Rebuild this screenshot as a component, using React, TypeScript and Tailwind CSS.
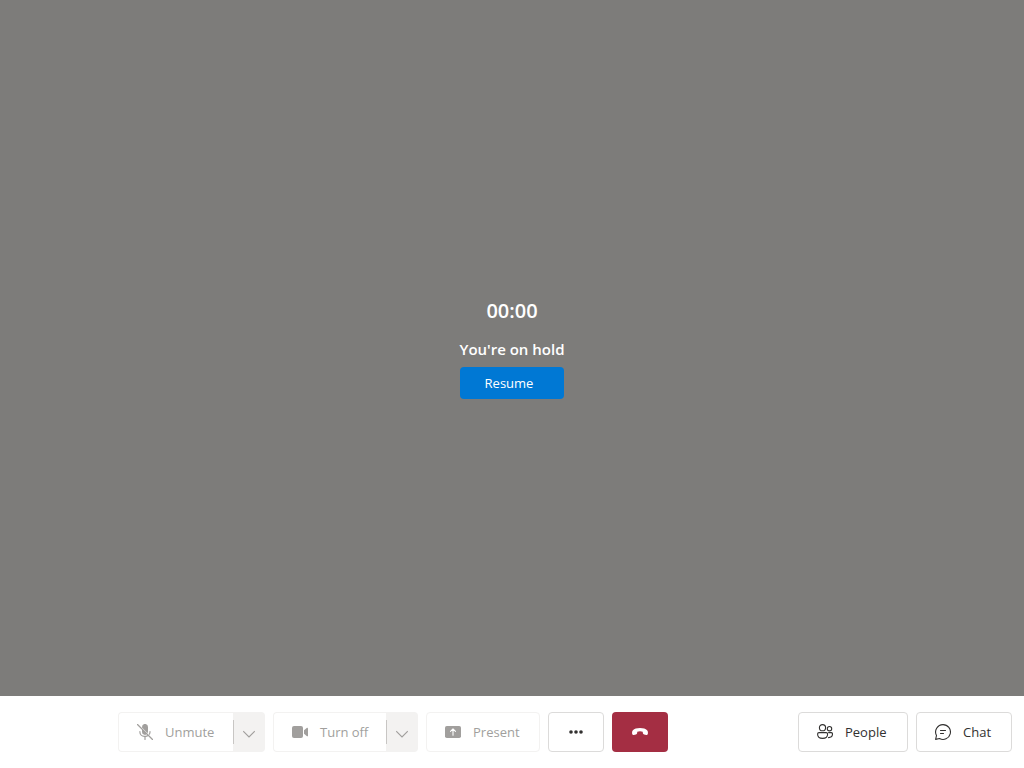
import React, { useState } from 'react';

function MicOffIcon() {
  return (
    <svg className="size-4 shrink-0" viewBox="0 0 16 16" fill="currentColor" aria-hidden="true">
      <path d="M5 2.9A3 3 0 0 1 11 3v4.6c0 .6-.1 1.100-.4 1.600L5 3.500zM5 5.100l5 5a3 3 0 0 1-5-2.200z" />
      <path
        d="M2.900 7.500v.6c0 2.400 2 4.300 4.400 4.300h1.200c.9 0 1.800-.3 2.500-.8M13 7.500v.6c0 .8-.2 1.500-.6 2.100M8 12.500V15.500"
        fill="none"
        stroke="currentColor"
        strokeWidth="1.200"
        strokeLinecap="round"
      />
      <path d="M.5.5l15 15" stroke="currentColor" strokeWidth="1.200" strokeLinecap="round" />
    </svg>
  );
}

function VideoIcon() {
  return (
    <svg className="size-4 shrink-0" viewBox="0 0 16 16" fill="currentColor" aria-hidden="true">
      <rect x="0" y="2" width="11" height="12" rx="2" />
      <path d="M12 6.300l3-2.500c.4-.3 1-.1 1 .5v7.400c0 .6-.6.8-1 .5l-3-2.500z" />
    </svg>
  );
}

function PresentIcon() {
  return (
    <svg className="size-4 shrink-0" viewBox="0 0 16 16" aria-hidden="true">
      <rect x="0" y="2" width="16" height="12" rx="1.800" fill="currentColor" />
      <path
        d="M8 11.300V4.900M5.500 7.300L8 4.800l2.500 2.500"
        fill="none"
        stroke="white"
        strokeWidth="1.100"
        strokeLinecap="round"
        strokeLinejoin="round"
      />
    </svg>
  );
}

function ChevronIcon() {
  return (
    <svg className="h-3 w-3" viewBox="0 0 12 12" fill="none" aria-hidden="true">
      <path d="M.2 3.200L6 9l5.800-5.800" stroke="currentColor" strokeWidth="1.100" />
    </svg>
  );
}

function MoreIcon() {
  return (
    <svg className="size-4" viewBox="0 0 16 16" fill="currentColor" aria-hidden="true">
      <circle cx="3" cy="8" r="1.800" />
      <circle cx="8" cy="8" r="1.800" />
      <circle cx="13" cy="8" r="1.800" />
    </svg>
  );
}

function HangUpIcon() {
  return (
    <svg className="size-4" viewBox="0 0 16 16" fill="currentColor" aria-hidden="true">
      <path d="M8 4c3.200 0 5.700.8 7.100 2.300.9 1 1 2.300.7 3.600-.2.800-.8 1.200-1.600 1l-2.100-.4c-.7-.1-1.100-.6-1.200-1.200l-.2-1.500C9.900 7.500 9 7.300 8 7.300s-1.900.2-2.700.5l-.2 1.500c-.1.600-.5 1.100-1.200 1.200l-2.100.4c-.8.200-1.400-.2-1.600-1C-.1 8.600 0 7.300.9 6.300 2.300 4.800 4.800 4 8 4z" />
    </svg>
  );
}

function PeopleIcon() {
  return (
    <svg
      className="size-4 shrink-0"
      viewBox="0 0 16 16"
      fill="none"
      stroke="currentColor"
      strokeWidth="1.100"
      strokeLinecap="round"
      strokeLinejoin="round"
      aria-hidden="true"
    >
      <circle cx="5.500" cy="3.700" r="3.100" />
      <circle cx="12.500" cy="4.700" r="2.200" />
      <path d="M2 8.600h7.200c.8 0 1.400.6 1.400 1.400 0 2.700-1.900 4.400-5 4.400S.6 12.700.6 10c0-.8.600-1.400 1.400-1.400zM11.600 8.600h2.500c.8 0 1.400.6 1.400 1.400 0 2.400-1.500 3.600-4 3.600" />
    </svg>
  );
}

function ChatIcon() {
  return (
    <svg
      className="size-4 shrink-0"
      viewBox="0 0 16 16"
      fill="none"
      stroke="currentColor"
      strokeWidth="1.100"
      strokeLinecap="round"
      strokeLinejoin="round"
      aria-hidden="true"
    >
      <path d="M8 .6a7.400 7.400 0 1 1-3.500 13.900L.6 15.400l.9-3.900A7.400 7.400 0 0 1 8 .6z" />
      <path d="M5.500 6.500h5M5.500 9.500h3" />
    </svg>
  );
}

interface CallButtonProps {
  icon: React.ReactNode;
  label: string;
  size: string;
  disabled?: boolean;
}

function CallButton({ icon, label, size, disabled }: CallButtonProps) {
  const tone = disabled ? 'border-[#f3f2f1] text-[#a19f9d]' : 'border-[#dcdbda] text-[#323130]';
  return (
    <button
      type="button"
      disabled={disabled}
      className={`flex h-10 items-center gap-3 rounded border bg-white pl-[18px] text-[13px] ${tone} ${size}`}
    >
      {icon}
      <span className="pt-0.5">{label}</span>
    </button>
  );
}

function SplitButton({ icon, label, size, menuLabel }: CallButtonProps & { menuLabel: string }) {
  return (
    <div className="flex h-10 text-[#a19f9d]">
      <button
        type="button"
        disabled
        className={`flex items-center gap-3 rounded-l border border-r-0 border-[#f3f2f1] bg-white pl-[18px] text-[13px] ${size}`}
      >
        {icon}
        <span className="pt-0.5">{label}</span>
      </button>
      <button
        type="button"
        disabled
        aria-label={menuLabel}
        className="flex w-8 items-center rounded-r bg-[#f3f2f1]"
      >
        <span className="h-6 w-px bg-[#c8c6c4]" />
        <span className="flex flex-1 justify-center pt-1 pr-0.5">
          <ChevronIcon />
        </span>
      </button>
    </div>
  );
}

export default function App() {
  const [held, setHeld] = useState(true);

  return (
    <div className="flex h-screen flex-col bg-white font-['Open_Sans','Noto_Sans',sans-serif] text-[#323130]">
      <main className="flex flex-1 flex-col items-center justify-center bg-[#7d7c7a] text-white">
        {held && (
          <>
            <p className="mb-3 text-xl leading-7 font-semibold">00:00</p>
            <p className="mb-1.5 text-[15px] leading-6 font-semibold">You&apos;re on hold</p>
            <button
              type="button"
              onClick={() => setHeld(false)}
              className="h-8 w-[104px] rounded bg-[#0078d4] pt-0.5 pr-1.5 text-[13px]"
            >
              Resume
            </button>
          </>
        )}
      </main>
      <footer className="flex items-center gap-3 py-4 pr-3">
        <div className="flex flex-1 justify-center gap-2">
          <SplitButton icon={<MicOffIcon />} label="Unmute" size="w-[115px]" menuLabel="Microphone options" />
          <SplitButton icon={<VideoIcon />} label="Turn off" size="w-[113px]" menuLabel="Camera options" />
          <CallButton icon={<PresentIcon />} label="Present" size="w-[114px]" disabled />
          <button
            type="button"
            aria-label="More"
            className="flex h-10 w-14 items-center justify-center rounded border border-[#dcdbda] bg-white"
          >
            <MoreIcon />
          </button>
          <button
            type="button"
            aria-label="Leave"
            className="flex h-10 w-14 items-center justify-center rounded bg-[#a42e43] text-white"
          >
            <HangUpIcon />
          </button>
        </div>
        <div className="flex gap-2">
          <CallButton icon={<PeopleIcon />} label="People" size="w-[110px]" />
          <CallButton icon={<ChatIcon />} label="Chat" size="w-24" />
        </div>
      </footer>
    </div>
  );
}
